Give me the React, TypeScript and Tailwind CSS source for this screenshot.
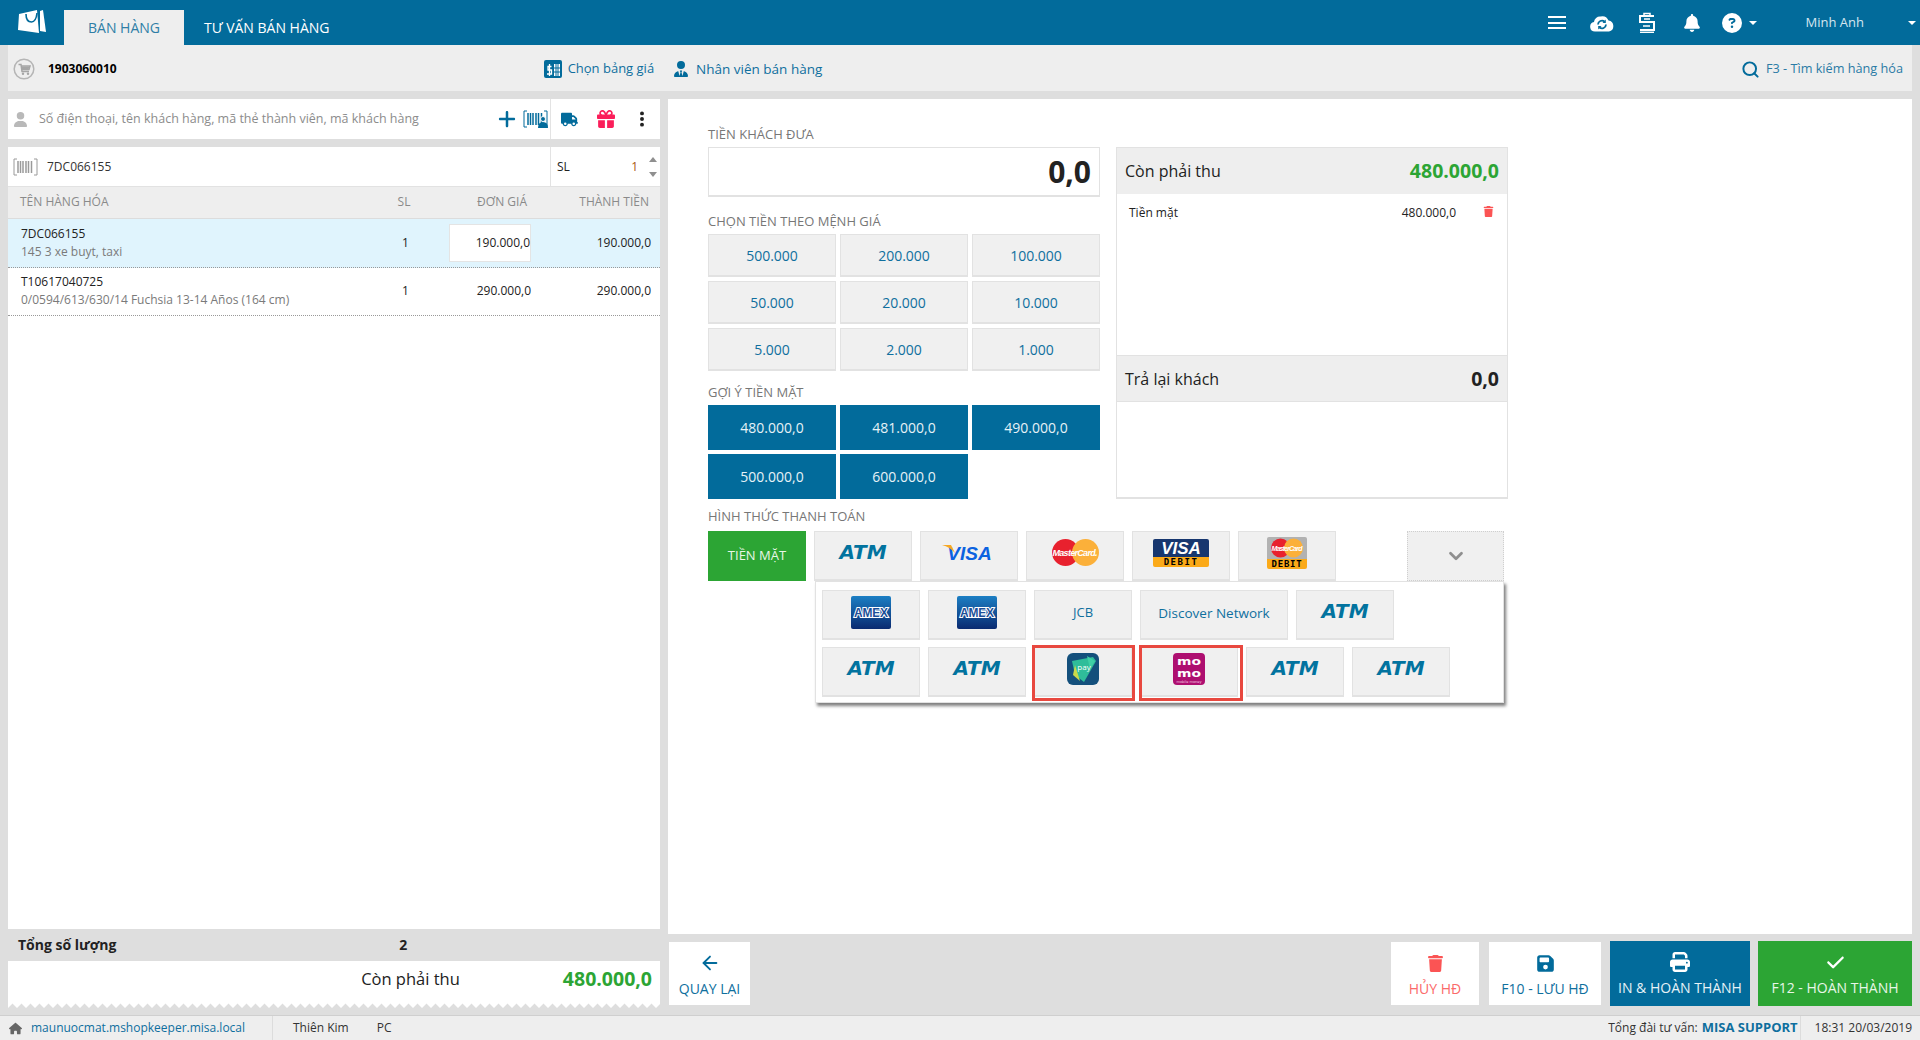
// ------------------------------------------------------------------------------------------------
import type {ReactNode} from "react";
import {
  FaBell,
  FaCheck,
  FaCircleQuestion,
  FaEllipsisVertical,
  FaFloppyDisk,
  FaGift,
  FaHouse,
  FaPlus,
  FaPrint,
  FaTrash,
  FaTruck,
  FaUser,
  FaUserTie,
} from "react-icons/fa6";
import {ArrowLeft, ChevronDown, Search} from "lucide-react";

// ------------------------------------------------------------------------------------------------

const denominations = ["500.000", "200.000", "100.000", "50.000", "20.000", "10.000", "5.000", "2.000", "1.000"];
const suggestions = ["480.000,0", "481.000,0", "490.000,0", "500.000,0", "600.000,0"];

// ------------------------------------------------------------------------------------------------

const Caret = ({className = ""}: {className?: string}) => (
  <span className={`w-0 h-0 border-x-[4px] border-x-transparent border-t-[4px] border-t-white ${className}`} />
);

const Logo = () => (
  <svg width="28" height="24" viewBox="0 0 28 24" className="ml-[18px] mt-[10px] shrink-0">
    <path d="M1 4L19 0L21 23L0 20Z" fill="#fff" />
    <path d="M22 1L25 0L28 22L22 21Z" fill="#fff" />
    <path d="M8 4Q8 12 13.5 12Q18 12 19 3" fill="none" stroke="#026b9b" strokeWidth="1.6" />
  </svg>
);

const CloudSync = () => (
  <svg width="24" height="18" viewBox="0 0 24 18">
    <path d="M5 17.5A4.8 4.8 0 0 1 4 8A6 6 0 0 1 10.500 2.500A7 7 0 0 1 18.500 6.500A5.600 5.600 0 0 1 19 17.500Z" fill="#fff" />
    <path d="M8 10.500A4 4 0 0 1 14.500 7.500M16 10.500A4 4 0 0 1 9.500 13.500" fill="none" stroke="#026b9b" strokeWidth="1.800" />
    <path d="M15.800 5.500V9H12.500ZM8.200 15.500V12H11.500Z" fill="#026b9b" />
  </svg>
);

const ClipFive = () => (
  <svg width="18" height="21" viewBox="0 0 18 21" fill="none" stroke="#fff" strokeWidth="2">
    <path d="M16 4H2V10H16V18H2" />
    <path d="M6 7H12M5 14H12" strokeWidth="1.500" />
    <path d="M6 3.500V1.500H12V3.500" strokeWidth="1.500" />
    <path d="M2 20.300H16" strokeWidth="1.400" />
  </svg>
);

const CartRing = () => (
  <svg width="22" height="22" viewBox="0 0 22 22">
    <circle cx="11" cy="11" r="9.800" fill="none" stroke="#b5b5b5" strokeWidth="1.500" />
    <path d="M5.500 6.500H8L9 13.500H16M8.300 8H17L16 11.500H8.800" fill="none" stroke="#a5a5a5" strokeWidth="1.500" />
    <path d="M8.500 8.500H16.500L15.700 11H9Z" fill="#a5a5a5" />
    <circle cx="10" cy="15.700" r="1.200" fill="#a5a5a5" />
    <circle cx="15" cy="15.700" r="1.200" fill="#a5a5a5" />
  </svg>
);

const PriceTable = () => (
  <svg width="18" height="18" viewBox="0 0 18 18">
    <rect width="18" height="18" rx="2" fill="#026b9b" />
    <rect x="10" y="4" width="6" height="12" fill="#fff" />
    <path d="M12 4V16M14 4V16M10 8H16M10 12H16" stroke="#026b9b" />
    <path d="M7.500 6.500H4V10H7.500V14H3M5.500 4V16" fill="none" stroke="#fff" strokeWidth="1.300" />
  </svg>
);

const Barcode = ({color, person}: {color: string; person?: boolean}) => (
  <svg width="25" height="18" viewBox="0 0 25 18" fill="none">
    <path d="M4 1H1V17H4M21 1H24V17H21" stroke={color} />
    <path d="M5 3V15M7.500 3V15M10 3V15M13 3V15M15.500 3V15M18.500 3V15" stroke={color} strokeWidth="1.500" />
    {person && <circle cx="20" cy="9" r="2.500" fill={color} stroke="#fff" />}
    {person && <path d="M15 18Q15 12 20 12Q25 12 25 18Z" fill={color} />}
  </svg>
);

// ------------------------------------------------------------------------------------------------

const AtmLogo = () => (
  <span className="font-['DejaVu_Sans',sans-serif] text-[20px] leading-none font-bold italic text-[#02739f] -mt-[7px]">ATM</span>
);

const VisaLogo = () => (
  <span className="relative font-['Liberation_Sans',sans-serif] text-[19px] leading-none font-bold italic text-[#0c62e0] -mt-[4px] pl-[1px]">
    VISA
    <svg width="13" height="8" viewBox="0 0 13 8" className="absolute -left-[4px] top-[1px]">
      <path d="M0 0H9L13 8Q8 2 0 0Z" fill="#f7a823" />
    </svg>
  </span>
);

const MasterCardLogo = () => (
  <svg width="47" height="27" viewBox="0 0 47 27" className="-mt-[6px]">
    <circle cx="13.500" cy="13.500" r="13.500" fill="#e8212e" />
    <circle cx="33.500" cy="13.500" r="13.500" fill="#fbb03a" />
    <text x="23" y="16.500" textAnchor="middle" fill="#fff" fontFamily="Liberation Sans" fontSize="9" fontWeight="700" fontStyle="italic" textLength="45">
      MasterCard.
    </text>
  </svg>
);

const VisaDebitLogo = () => (
  <div className="flex flex-col w-[56px] h-[28px] rounded-[2px] overflow-hidden -mt-[6px]">
    <div className="h-[18px] bg-[#17376f] text-white text-center font-['Liberation_Sans',sans-serif] text-[17px] leading-[19px] font-bold italic">VISA</div>
    <div className="h-[10px] bg-[#fbaa19] text-black text-center font-['DejaVu_Sans_Mono',monospace] text-[9px] leading-[10px] font-bold tracking-[1.500px]">DEBIT</div>
  </div>
);

const McDebitLogo = () => (
  <div className="flex flex-col w-[40px] h-[32px] rounded-[2px] overflow-hidden -mt-[5px]">
    <svg width="40" height="22" viewBox="0 0 40 22" className="bg-[#b2b2b2]">
      <circle cx="13.500" cy="11" r="9.500" fill="#e8212e" />
      <circle cx="26.500" cy="11" r="9.500" fill="#fbb03a" />
      <text x="20" y="13.500" textAnchor="middle" fill="#fff" fontFamily="Liberation Sans" fontSize="7" fontWeight="700" fontStyle="italic" textLength="31">
        MasterCard
      </text>
    </svg>
    <div className="h-[10px] bg-[#fbaa19] text-black text-center font-['DejaVu_Sans_Mono',monospace] text-[9px] leading-[10px] font-bold tracking-[0.800px]">DEBIT</div>
  </div>
);

const AmexLogo = () => (
  <svg width="40" height="33" viewBox="0 0 40 33" className="-mt-[4px]">
    <defs>
      <linearGradient id="amex" x1="0" y1="0" x2="0" y2="1">
        <stop offset="0" stopColor="#1c7fc4" />
        <stop offset="1" stopColor="#0a2a70" />
      </linearGradient>
    </defs>
    <rect width="40" height="33" rx="2" fill="url(#amex)" />
    <text x="20" y="20.500" textAnchor="middle" fill="#1c4f98" stroke="#fff" strokeWidth="2" paintOrder="stroke" fontFamily="Liberation Sans" fontSize="12" fontWeight="700" textLength="34">
      AMEX
    </text>
  </svg>
);

const PayLogo = () => (
  <svg width="32" height="32" viewBox="0 0 32 32" className="-mt-[5px]">
    <rect width="32" height="32" rx="6" fill="#14507c" />
    <path d="M5 8L26 4L29 8L17 29L8 22Z" fill="#2fbd9a" />
    <path d="M8 12L13 28L6 22Z" fill="#c9d94a" />
    <path d="M20 3L28 8L23 16Z" fill="#3fd0a5" />
    <text x="17" y="17" textAnchor="middle" fill="#fff" fontFamily="Open Sans" fontSize="8">pay</text>
  </svg>
);

const MomoLogo = () => (
  <svg width="32" height="32" viewBox="0 0 32 32" className="-mt-[5px]">
    <rect width="32" height="32" rx="4" fill="#ae0f70" />
    <text x="16" y="12" textAnchor="middle" fill="#fff" fontFamily="DejaVu Sans" fontSize="10" fontWeight="700" textLength="24" lengthAdjust="spacingAndGlyphs">mo</text>
    <text x="16" y="24" textAnchor="middle" fill="#fff" fontFamily="DejaVu Sans" fontSize="10" fontWeight="700" textLength="24" lengthAdjust="spacingAndGlyphs">mo</text>
    <text x="16" y="30" textAnchor="middle" fill="#f5c6e0" fontFamily="DejaVu Sans" fontSize="3.500">mobile money</text>
  </svg>
);

// ------------------------------------------------------------------------------------------------

const PayCell = ({children, wide, marker}: {children?: ReactNode; wide?: boolean; marker?: string}) => (
  <div
    className={`relative flex items-center justify-center h-[50px] ${wide ? "w-[148px]" : "w-[98px]"} shrink-0 bg-[#f0f0f0] border border-[#e2e2e2] border-b-2`}>
    {children}
    {marker && <span className={`absolute -top-[3px] -bottom-[6px] border-[3px] border-[#e8483f] ${marker}`} />}
  </div>
);

const SectionLabel = ({children, className}: {children: ReactNode; className: string}) => (
  <div className={`flex items-end text-[13px] leading-[18px] text-[#777] uppercase ${className}`}>{children}</div>
);

const FooterButton = ({icon, label, className}: {icon: ReactNode; label: string; className: string}) => (
  <div className={`flex flex-col items-center justify-start pt-[9px] text-[14px] leading-[18px] uppercase ${className}`}>
    <div className="h-[24px] flex items-center">{icon}</div>
    <div className="mt-[5px] whitespace-nowrap">{label}</div>
  </div>
);

// ------------------------------------------------------------------------------------------------

export default function App() {
  return (
    <div className="flex flex-col w-[1920px] h-[1040px] overflow-hidden bg-[#dedede] font-['Open_Sans',sans-serif] text-[#222]">
      {/* Header */}
      <div className="flex h-[45px] shrink-0 bg-[#026b9b] text-white">
        <Logo />
        <div className="flex items-center justify-center w-[120px] h-[35px] mt-[10px] ml-[18px] bg-[#eeeeee] text-[14px] text-[#2f7ea6]">BÁN HÀNG</div>
        <div className="flex items-center h-[35px] mt-[10px] ml-[20px] text-[14px]">TƯ VẤN BÁN HÀNG</div>
        <div className="flex items-center ml-auto h-full">
          <div className="flex flex-col gap-[3.500px] w-[18px] mr-[24px]">
            <span className="h-[2px] bg-white" />
            <span className="h-[2px] bg-white" />
            <span className="h-[2px] bg-white" />
          </div>
          <CloudSync />
          <span className="ml-[24px]"><ClipFive /></span>
          <FaBell className="ml-[27px] text-[18px]" />
          <FaCircleQuestion className="ml-[21px] text-[20px]" />
          <Caret className="ml-[7px]" />
          <span className="ml-[49px] text-[13px] text-[#d5e6ef]">Minh Anh</span>
          <Caret className="ml-[44px] mr-[4px]" />
        </div>
      </div>

      {/* Sub header */}
      <div className="flex items-center h-[46px] shrink-0 mx-2 pt-[2px] bg-[#eeeeee]">
        <span className="ml-[5px]"><CartRing /></span>
        <span className="ml-[13px] text-[12px] font-bold text-black">1903060010</span>
        <span className="ml-[427px]"><PriceTable /></span>
        <span className="ml-[6px] text-[13px] text-[#0f6f9e]">Chọn bảng giá</span>
        <FaUserTie className="ml-[19px] text-[16px] text-[#026b9b]" />
        <span className="ml-[7px] text-[13.500px] text-[#0f6f9e]">Nhân viên bán hàng</span>
        <Search className="ml-auto text-[#026b9b]" size={19} strokeWidth={2.500} />
        <span className="ml-[6px] mr-[9px] text-[12.700px] text-[#2a7ba5]">F3 - Tìm kiếm hàng hóa</span>
      </div>

      {/* Body */}
      <div className="flex flex-1 min-h-0 gap-2 pt-2 px-2">
        {/* Left column */}
        <div className="flex flex-col w-[652px] shrink-0">
          <div className="flex h-[40px] shrink-0 bg-white">
            <div className="flex items-center w-[543px] shrink-0 border-r border-[#e3e3e3]">
              <FaUser className="ml-[5px] text-[15px] text-[#b9b9b9]" />
              <span className="ml-[11px] text-[12.500px] text-[#8c8c8c]">Số điện thoại, tên khách hàng, mã thẻ thành viên, mã khách hàng</span>
              <FaPlus className="ml-auto text-[20px] text-[#026b9b]" />
              <span className="ml-[6px] mr-[2px]"><Barcode color="#026b9b" person /></span>
            </div>
            <FaTruck className="ml-[10px] mt-[12px] text-[17px] text-[#026b9b]" />
            <FaGift className="ml-[19px] mt-[11px] text-[18px] text-[#fb1e5a]" />
            <FaEllipsisVertical className="ml-[18px] mt-[11px] text-[18px] text-[#222]" />
          </div>

          <div className="flex flex-col h-[782px] shrink-0 mt-2 bg-white">
            <div className="flex h-[40px] shrink-0 border-b border-[#e2e2e2]">
              <div className="flex items-center w-[543px] shrink-0 border-r border-[#e3e3e3]">
                <span className="ml-[5px]"><Barcode color="#9a9a9a" /></span>
                <span className="ml-[9px] text-[12px] text-[#333]">7DC066155</span>
              </div>
              <span className="self-center ml-[6px] text-[12px]">SL</span>
              <span className="self-center ml-auto text-[12px] text-[#a85b12]">1</span>
              <div className="flex flex-col justify-between self-center h-[20px] ml-[11px] mr-[3px]">
                <span className="w-0 h-0 border-x-[4px] border-x-transparent border-b-[5px] border-b-[#8f8f8f]" />
                <span className="w-0 h-0 border-x-[4px] border-x-transparent border-t-[5px] border-t-[#8f8f8f]" />
              </div>
            </div>
            <div className="grid grid-cols-[362px_70px_91px_1fr] items-center h-[32px] shrink-0 pl-[12px] pr-[11px] pb-[2px] bg-[#eeeeee] border-b border-[#dcdcdc] text-[12px] text-[#8a8a8a] uppercase">
              <span>Tên hàng hóa</span>
              <span className="text-center -ml-[26px]">SL</span>
              <span className="text-right -ml-[12px] pr-[16px]">Đơn giá</span>
              <span className="text-right">Thành tiền</span>
            </div>
            <div className="grid grid-cols-[362px_70px_91px_1fr] items-center h-[49px] shrink-0 pl-[13px] pr-[9px] bg-[#e0f4fd] border-b border-dotted border-[#999] text-[12px]">
              <div>
                <div className="leading-[18px] text-[#222]">7DC066155</div>
                <div className="leading-[18px] text-[12px] text-[#7a7a7a]">145 3 xe buyt, taxi</div>
              </div>
              <span className="text-center -ml-[25px]">1</span>
              <div className="flex items-center justify-end h-[38px] ml-[8px] mr-[1px] bg-white border border-[#e4e4e4] -translate-x-[12px]">190.000,0</div>
              <span className="text-right">190.000,0</span>
            </div>
            <div className="grid grid-cols-[362px_70px_91px_1fr] items-center h-[48px] shrink-0 pl-[13px] pr-[9px] pb-[2px] border-b border-dotted border-[#999] text-[12px]">
              <div>
                <div className="leading-[18px] text-[#222]">T10617040725</div>
                <div className="leading-[18px] text-[12px] text-[#7a7a7a] whitespace-nowrap">0/0594/613/630/14 Fuchsia 13-14 Años (164 cm)</div>
              </div>
              <span className="text-center -ml-[25px]">1</span>
              <span className="text-right pr-[13px] -ml-[13px]">290.000,0</span>
              <span className="text-right">290.000,0</span>
            </div>
          </div>

          <div className="flex items-center h-[32px] shrink-0 pb-[2px] text-[14px] font-bold text-[#222]">
            <span className="ml-[10px]">Tổng số lượng</span>
            <span className="ml-[283px]">2</span>
          </div>
          <div className="flex items-center justify-end h-[42px] shrink-0 pr-[8px] pb-[6px] bg-white">
            <span className="mr-[103px] text-[16.500px] text-[#222]">Còn phải thu</span>
            <span className="text-[19.500px] font-bold text-[#2ca534]">480.000,0</span>
          </div>
          <svg width="652" height="5" className="shrink-0">
            <defs>
              <pattern id="zig" width="9" height="5" patternUnits="userSpaceOnUse">
                <path d="M0 0H9V5L4.500 0.500L0 5Z" fill="#fff" />
              </pattern>
            </defs>
            <rect width="652" height="5" fill="url(#zig)" />
          </svg>
        </div>

        {/* Right column */}
        <div className="flex flex-col flex-1 min-w-0">
          <div className="h-[835px] shrink-0 pl-[40px] bg-white">
            <div className="flex gap-4">
              <div className="flex flex-col w-[392px] shrink-0">
                <SectionLabel className="h-[48px] pb-[4px]">Tiền khách đưa</SectionLabel>
                <div className="flex items-center justify-end h-[50px] pr-[8px] border border-[#e2e2e2] border-b-2 text-[30px] leading-none font-bold text-[#222]">0,0</div>
                <SectionLabel className="h-[37px] pb-[4px]">Chọn tiền theo mệnh giá</SectionLabel>
                <div className="grid grid-cols-3 gap-1">
                  {denominations.map((value) => (
                    <div key={value} className="flex items-center justify-center h-[43px] bg-[#f0f0f0] border border-[#e2e2e2] border-b-2 text-[14px] text-[#0f6f9e]">
                      {value}
                    </div>
                  ))}
                </div>
                <SectionLabel className="h-[34px] pb-[4px]">Gợi ý tiền mặt</SectionLabel>
                <div className="grid grid-cols-3 gap-1">
                  {suggestions.map((value) => (
                    <div key={value} className="flex items-center justify-center h-[45px] bg-[#026b9b] text-[14px] text-[#e6f2f7]">
                      {value}
                    </div>
                  ))}
                </div>
              </div>

              <div className="flex flex-col w-[392px] h-[352px] mt-[48px] shrink-0 border border-[#e2e2e2] border-b-2">
                <div className="flex items-center justify-between h-[46px] shrink-0 px-[8px] bg-[#eeeeee]">
                  <span className="text-[16px] text-[#222]">Còn phải thu</span>
                  <span className="text-[19.500px] font-bold text-[#2ca534]">480.000,0</span>
                </div>
                <div className="flex flex-1 items-start pt-[10px] pl-[12px] pr-[13px] text-[12px] text-[#222]">
                  <span>Tiền mặt</span>
                  <span className="ml-auto">480.000,0</span>
                  <FaTrash className="ml-[27px] mt-[2px] text-[11px] text-[#fb5454]" />
                </div>
                <div className="flex items-center justify-between h-[47px] shrink-0 px-[8px] bg-[#eeeeee] border-y border-[#e2e2e2]">
                  <span className="text-[16px] text-[#222]">Trả lại khách</span>
                  <span className="text-[19.500px] font-bold text-[#222]">0,0</span>
                </div>
                <div className="h-[95px] shrink-0" />
              </div>
            </div>

            <SectionLabel className="h-[32px] pb-[6px]">Hình thức thanh toán</SectionLabel>
            <div className="relative flex gap-2 w-[796px]">
              <div className="flex items-center justify-center w-[98px] h-[50px] bg-[#2ca534] text-[13px] text-[#e8f6e8] uppercase">Tiền mặt</div>
              <PayCell><AtmLogo /></PayCell>
              <PayCell><VisaLogo /></PayCell>
              <PayCell><MasterCardLogo /></PayCell>
              <PayCell><VisaDebitLogo /></PayCell>
              <PayCell><McDebitLogo /></PayCell>
              <div className="flex items-center justify-center w-[97px] h-[50px] ml-auto bg-[#f0f0f0] border border-dotted border-[#cfcfcf]">
                <ChevronDown className="text-[#8f8f8f]" size={22} strokeWidth={3} />
              </div>

              {/* Payment dropdown */}
              <div className="absolute left-[107px] top-[50px] flex flex-col gap-[7px] w-[689px] h-[122px] pl-[6px] pt-[8px] bg-white border border-[#e2e2e2] shadow-[2px_3px_3px_rgba(0,0,0,0.5)]">
                <div className="flex gap-2">
                  <PayCell><AmexLogo /></PayCell>
                  <PayCell><AmexLogo /></PayCell>
                  <PayCell><span className="-mt-[3px] text-[13px] text-[#0f6f9e]">JCB</span></PayCell>
                  <PayCell wide><span className="-mt-[3px] text-[13.500px] text-[#0f6f9e] whitespace-nowrap">Discover Network</span></PayCell>
                  <PayCell><AtmLogo /></PayCell>
                </div>
                <div className="flex gap-2">
                  <PayCell><AtmLogo /></PayCell>
                  <PayCell><AtmLogo /></PayCell>
                  <PayCell marker="-left-[3px] -right-[4px]"><PayLogo /></PayCell>
                  <PayCell marker="-left-[2px] -right-[6px]"><MomoLogo /></PayCell>
                  <PayCell><AtmLogo /></PayCell>
                  <PayCell><AtmLogo /></PayCell>
                </div>
              </div>
            </div>
          </div>

          <div className="flex items-start flex-1 min-h-0 pt-[8px]">
            <FooterButton
              icon={<ArrowLeft className="text-[#026b9b]" size={22} strokeWidth={2} />}
              label="Quay lại"
              className="w-[81px] h-[63px] ml-[1px] bg-white text-[#0f6f9e]"
            />
            <FooterButton
              icon={<FaTrash className="text-[17px] text-[#fb5454]" />}
              label="Hủy HĐ"
              className="w-[88px] h-[63px] ml-auto bg-white text-[#fb6a6a]"
            />
            <FooterButton
              icon={<FaFloppyDisk className="text-[19px] text-[#026b9b]" />}
              label="F10 - Lưu HĐ"
              className="w-[112px] h-[63px] ml-[10px] bg-white text-[#0f6f9e]"
            />
            <FooterButton
              icon={<FaPrint className="text-[20px] text-white" />}
              label="In & Hoàn thành"
              className="w-[140px] h-[65px] ml-[9px] -mt-[1px] bg-[#026b9b] text-[#e6f2f7]"
            />
            <FooterButton
              icon={<FaCheck className="text-[19px] text-white" />}
              label="F12 - Hoàn thành"
              className="w-[154px] h-[65px] ml-[8px] -mt-[1px] bg-[#2ca534] text-[#e8f6e8]"
            />
          </div>
        </div>
      </div>

      {/* Status bar */}
      <div className="flex items-center h-[25px] shrink-0 bg-[#eeeeee] border-t border-[#cfcfcf] text-[12px] text-[#333]">
        <FaHouse className="ml-[9px] text-[13px] text-[#666]" />
        <span className="ml-[9px] w-[241px] text-[#0f6f9e]">maunuocmat.mshopkeeper.misa.local</span>
        <span className="w-[21px] h-full border-l border-[#dcdcdc]" />
        <span>Thiên Kim</span>
        <span className="ml-[28px]">PC</span>
        <span className="ml-auto">Tổng đài tư vấn:</span>
        <span className="ml-[4px] text-[13px] font-bold text-[#0f6f9e]">MISA SUPPORT</span>
        <span className="ml-[2px] pl-[14px] h-full flex items-center border-l border-[#dcdcdc]">18:31 20/03/2019</span>
        <span className="w-[8px]" />
      </div>
    </div>
  );
}
// ------------------------------------------------------------------------------------------------
